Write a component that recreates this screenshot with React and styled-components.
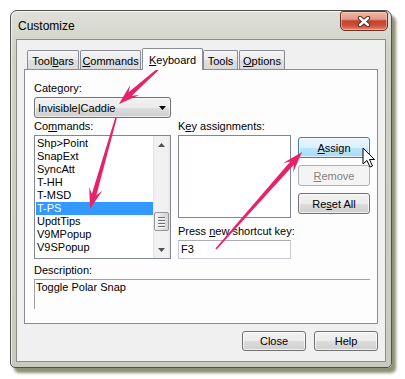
import React from "react";
import styled, { createGlobalStyle } from "styled-components";

const commands = [
  "Shp>Point",
  "SnapExt",
  "SyncAtt",
  "T-HH",
  "T-MSD",
  "T-PS",
  "UpdtTips",
  "V9MPopup",
  "V9SPopup",
];

const tabs = [
  { key: "toolbars", w: 52, label: <>Tool<u>b</u>ars</> },
  { key: "commands", w: 61, label: <><u>C</u>ommands</> },
  { key: "keyboard", w: 61, label: <><u>K</u>eyboard</>, active: true },
  { key: "tools", w: 35, label: <>Tools</> },
  { key: "options", w: 46, label: <><u>O</u>ptions</> },
];

// pink call-out arrows, page coordinates
const arrows = [
  { x1: 164, y1: 64, x2: 119, y2: 104 },
  { x1: 116, y1: 118, x2: 90, y2: 209 },
  { x1: 216, y1: 249, x2: 302, y2: 152 },
];

function arrowPoints({ x1, y1, x2, y2 }) {
  const dx = x2 - x1;
  const dy = y2 - y1;
  const len = Math.hypot(dx, dy);
  const ux = dx / len;
  const uy = dy / len;
  const px = -uy;
  const py = ux;
  const head = 19;
  const hw = 6.8;
  const sw = 2.4;
  const tw = 0.8;
  const bx = x2 - ux * head;
  const by = y2 - uy * head;
  const pts = [
    [x1 + px * tw, y1 + py * tw],
    [bx + ux * 4 + px * sw, by + uy * 4 + py * sw],
    [bx + px * hw - ux * 2, by + py * hw - uy * 2],
    [x2, y2],
    [bx - px * hw - ux * 2, by - py * hw - uy * 2],
    [bx + ux * 4 - px * sw, by + uy * 4 - py * sw],
    [x1 - px * tw, y1 - py * tw],
  ];
  return pts.map((p) => p[0].toFixed(1) + "," + p[1].toFixed(1)).join(" ");
}

function App() {
  return (
    <Page>
      <GlobalStyle />
      <Window>
        <TitleBar>
          <Title>Customize</Title>
          <CloseBox>
            <svg width="14" height="11" viewBox="0 0 14 11">
              <path d="M3 2 L11 9 M11 2 L3 9" stroke="#5a2a22" strokeWidth="4.4" strokeLinecap="round" />
              <path d="M3 2 L11 9 M11 2 L3 9" stroke="#ffffff" strokeWidth="2.4" strokeLinecap="round" />
            </svg>
          </CloseBox>
        </TitleBar>

        <Client>
          <TabRow>
            {tabs.map((t) => (
              <Tab key={t.key} $w={t.w} $active={t.active}>
                {t.label}
              </Tab>
            ))}
          </TabRow>

          <Panel>
            <Label>
              Cate<u>g</u>ory:
            </Label>
            <Select>
              <span>Invisible|Caddie</span>
              <svg width="7" height="4" viewBox="0 0 7 4">
                <path d="M0 0 H7 L3.5 4 Z" fill="#000" />
              </svg>
            </Select>

            <MainRow>
              <Column $w={137}>
                <Label>
                  Co<u>m</u>mands:
                </Label>
                <ListBox>
                  <Items>
                    {commands.map((c) => (
                      <Item key={c} $selected={c === "T-PS"}>
                        {c}
                      </Item>
                    ))}
                  </Items>
                  <ScrollBar>
                    <ScrollArrow>
                      <svg width="7" height="4" viewBox="0 0 7 4">
                        <path d="M0 4 H7 L3.5 0 Z" fill="#505050" />
                      </svg>
                    </ScrollArrow>
                    <Track $offset={59}>
                      <Thumb>
                        <Grip />
                        <Grip />
                        <Grip />
                        <Grip />
                      </Thumb>
                    </Track>
                    <ScrollArrow>
                      <svg width="7" height="4" viewBox="0 0 7 4">
                        <path d="M0 0 H7 L3.5 4 Z" fill="#505050" />
                      </svg>
                    </ScrollArrow>
                  </ScrollBar>
                </ListBox>
              </Column>

              <Column $w={113}>
                <Label>
                  K<u>e</u>y assignments:
                </Label>
                <KeyBox />
                <Label $top={6}>
                  Press <u>n</u>ew shortcut key:
                </Label>
                <Input>F3</Input>
              </Column>

              <ButtonColumn>
                <Button $hover>
                  <u>A</u>ssign
                </Button>
                <Button disabled>
                  <u>R</u>emove
                </Button>
                <Button>
                  Re<u>s</u>et All
                </Button>
              </ButtonColumn>
            </MainRow>

            <Label $top={4}>Description:</Label>
            <Description>Toggle Polar Snap</Description>
          </Panel>

          <Footer>
            <Button $w={64} $h={20}>
              Close
            </Button>
            <Button $w={64} $h={20}>
              Help
            </Button>
          </Footer>
        </Client>
      </Window>

      <Overlay width="405" height="379" viewBox="0 0 405 379">
        {arrows.map((a, i) => (
          <polygon key={i} points={arrowPoints(a)} fill="#e6226b" />
        ))}
        <path
          d="M363 148 L363 164 L367 160.5 L370 167 L372.5 166 L369.5 159.5 L374.5 159.5 Z"
          fill="#ffffff"
          stroke="#000000"
          strokeWidth="1"
          strokeLinejoin="round"
        />
      </Overlay>
    </Page>
  );
}

const GlobalStyle = createGlobalStyle`
  html, body {
    margin: 0;
    padding: 0;
    background: #ffffff;
  }
  body {
    font-family: "Liberation Sans", Arial, sans-serif;
    font-size: 11px;
    color: #000000;
  }
  * {
    box-sizing: border-box;
  }
  u {
    text-decoration: underline;
    text-underline-offset: 1px;
  }
`;

const Page = styled.div`
  position: relative;
  width: 405px;
  height: 379px;
  padding: 10px 0 0 10px;
  overflow: hidden;
`;

const Window = styled.div`
  width: 382px;
  height: 358px;
  display: flex;
  flex-direction: column;
  padding: 0 5px 5px 5px;
  border: 1px solid #4e5149;
  border-radius: 7px 7px 5px 5px;
  background: linear-gradient(#dfe0d9, #d0d2c6 40px, #c8cabd);
  box-shadow: 4px 5px 3px rgba(96, 98, 58, 0.7),
    inset 1px 1px 0 rgba(255, 255, 255, 0.7);
`;

const TitleBar = styled.div`
  height: 28px;
  display: flex;
  align-items: flex-start;
  justify-content: space-between;
  margin-right: -2px;
`;

const Title = styled.div`
  padding: 8px 0 0 2px;
  font-size: 12px;
  line-height: 14px;
`;

const CloseBox = styled.div`
  width: 48px;
  height: 20px;
  display: flex;
  align-items: center;
  justify-content: center;
  border: 1px solid #6e2f26;
  border-radius: 3px 3px 5px 5px;
  background: linear-gradient(
    #efb6a9 0%,
    #e39a89 40%,
    #c6412b 50%,
    #d04f39 75%,
    #e08a74 100%
  );
  box-shadow: inset 0 0 0 1px rgba(255, 220, 210, 0.5);
`;

const Client = styled.div`
  flex: 1;
  display: flex;
  flex-direction: column;
  padding: 8px 7px 10px 7px;
  border: 1px solid #8c8f87;
  background: #f0f0f0;
`;

const TabRow = styled.div`
  height: 21px;
  display: flex;
  align-items: flex-end;
  padding-left: 3px;
  position: relative;
  z-index: 1;
`;

const Tab = styled.div`
  width: ${(p) => p.$w}px;
  height: ${(p) => (p.$active ? 22 : 19)}px;
  margin-right: ${(p) => (p.$active ? 0 : 1)}px;
  margin-bottom: ${(p) => (p.$active ? -1 : 0)}px;
  padding-top: ${(p) => (p.$active ? 0 : 1)}px;
  display: flex;
  align-items: center;
  justify-content: center;
  border: 1px solid #898c95;
  border-bottom: none;
  border-radius: 2px 2px 0 0;
  background: ${(p) =>
    p.$active
      ? "#fdfdfd"
      : "linear-gradient(#f5f5f5, #ebebeb 50%, #dfdfdf 51%, #dadada)"};
  position: relative;
  z-index: ${(p) => (p.$active ? 2 : 1)};
  white-space: nowrap;
`;

const Panel = styled.div`
  flex: 1;
  display: flex;
  flex-direction: column;
  padding: 11px 7px 0 9px;
  border: 1px solid #898c95;
  background: #fdfdfd;
`;

const Label = styled.div`
  height: 14px;
  line-height: 14px;
  margin-top: ${(p) => p.$top || 0}px;
  margin-bottom: 2px;
  white-space: nowrap;
`;

const Select = styled.div`
  width: 137px;
  height: 21px;
  display: flex;
  align-items: center;
  justify-content: space-between;
  padding: 0 4px 0 3px;
  border: 1px solid #707070;
  border-radius: 3px;
  background: linear-gradient(#f2f2f2 0%, #ebebeb 50%, #dddddd 51%, #cfcfcf 100%);
  box-shadow: inset 0 0 0 1px rgba(255, 255, 255, 0.6);
`;

const MainRow = styled.div`
  display: flex;
  gap: 7px;
  margin-top: 1px;
`;

const Column = styled.div`
  width: ${(p) => p.$w}px;
  display: flex;
  flex-direction: column;
`;

const ListBox = styled.div`
  height: 124px;
  display: flex;
  border: 1px solid #828790;
  background: #ffffff;
`;

const Items = styled.div`
  flex: 1;
  padding: 1px 0 0 1px;
  overflow: hidden;
`;

const Item = styled.div`
  height: 13px;
  line-height: 13px;
  padding-left: 1px;
  white-space: nowrap;
  background: ${(p) => (p.$selected ? "#3399ff" : "transparent")};
  color: ${(p) => (p.$selected ? "#ffffff" : "#000000")};
`;

const ScrollBar = styled.div`
  width: 17px;
  display: flex;
  flex-direction: column;
  background: linear-gradient(
    to right,
    #e3e3e3,
    #f1f1f1 2px,
    #f1f1f1 15px,
    #e6e6e6
  );
`;

const ScrollArrow = styled.div`
  height: 17px;
  display: flex;
  align-items: center;
  justify-content: center;
`;

const Track = styled.div`
  flex: 1;
  padding-top: ${(p) => p.$offset}px;
`;

const Thumb = styled.div`
  height: 19px;
  margin: 0 1px;
  display: flex;
  flex-direction: column;
  align-items: center;
  justify-content: center;
  gap: 2px;
  border: 1px solid #979797;
  border-radius: 2px;
  background: linear-gradient(to right, #f3f3f3, #e4e4e4 50%, #d6d6d6);
`;

const Grip = styled.div`
  width: 7px;
  height: 1px;
  background: #6e6e6e;
  box-shadow: 0 1px 0 #ffffff;
`;

const KeyBox = styled.div`
  height: 83px;
  border: 1px solid #828790;
  background: #ffffff;
`;

const Input = styled.div`
  height: 19px;
  line-height: 17px;
  padding-left: 2px;
  border: 1px solid #c9cbd0;
  border-top-color: #abadb3;
  background: #ffffff;
`;

const ButtonColumn = styled.div`
  width: 72px;
  padding-top: 18px;
  display: flex;
  flex-direction: column;
  gap: 7px;
`;

const Button = styled.button`
  width: ${(p) => (p.$w ? p.$w + "px" : "100%")};
  height: ${(p) => p.$h || 21}px;
  padding: 0;
  font: inherit;
  color: #000000;
  border: 1px solid ${(p) => (p.$hover ? "#3c7fb1" : "#707070")};
  border-radius: 3px;
  background: ${(p) =>
    p.$hover
      ? "linear-gradient(#eaf6fd 0%, #d9f0fc 50%, #bee6fd 51%, #a7d9f5 100%)"
      : "linear-gradient(#f2f2f2 0%, #ebebeb 50%, #dddddd 51%, #cfcfcf 100%)"};
  box-shadow: inset 0 0 0 1px rgba(255, 255, 255, 0.7);

  &:disabled {
    color: #838383;
    border-color: #adb2b5;
    background: #f4f4f4;
    box-shadow: none;
  }
`;

const Description = styled.div`
  height: 30px;
  padding: 0 0 0 1px;
  line-height: 14px;
  border-top: 1px solid #a0a0a0;
  border-left: 1px solid #a0a0a0;
`;

const Footer = styled.div`
  margin-top: 7px;
  display: flex;
  justify-content: flex-end;
  gap: 8px;
`;

const Overlay = styled.svg`
  position: absolute;
  top: 0;
  left: 0;
  pointer-events: none;
`;

export default App;
